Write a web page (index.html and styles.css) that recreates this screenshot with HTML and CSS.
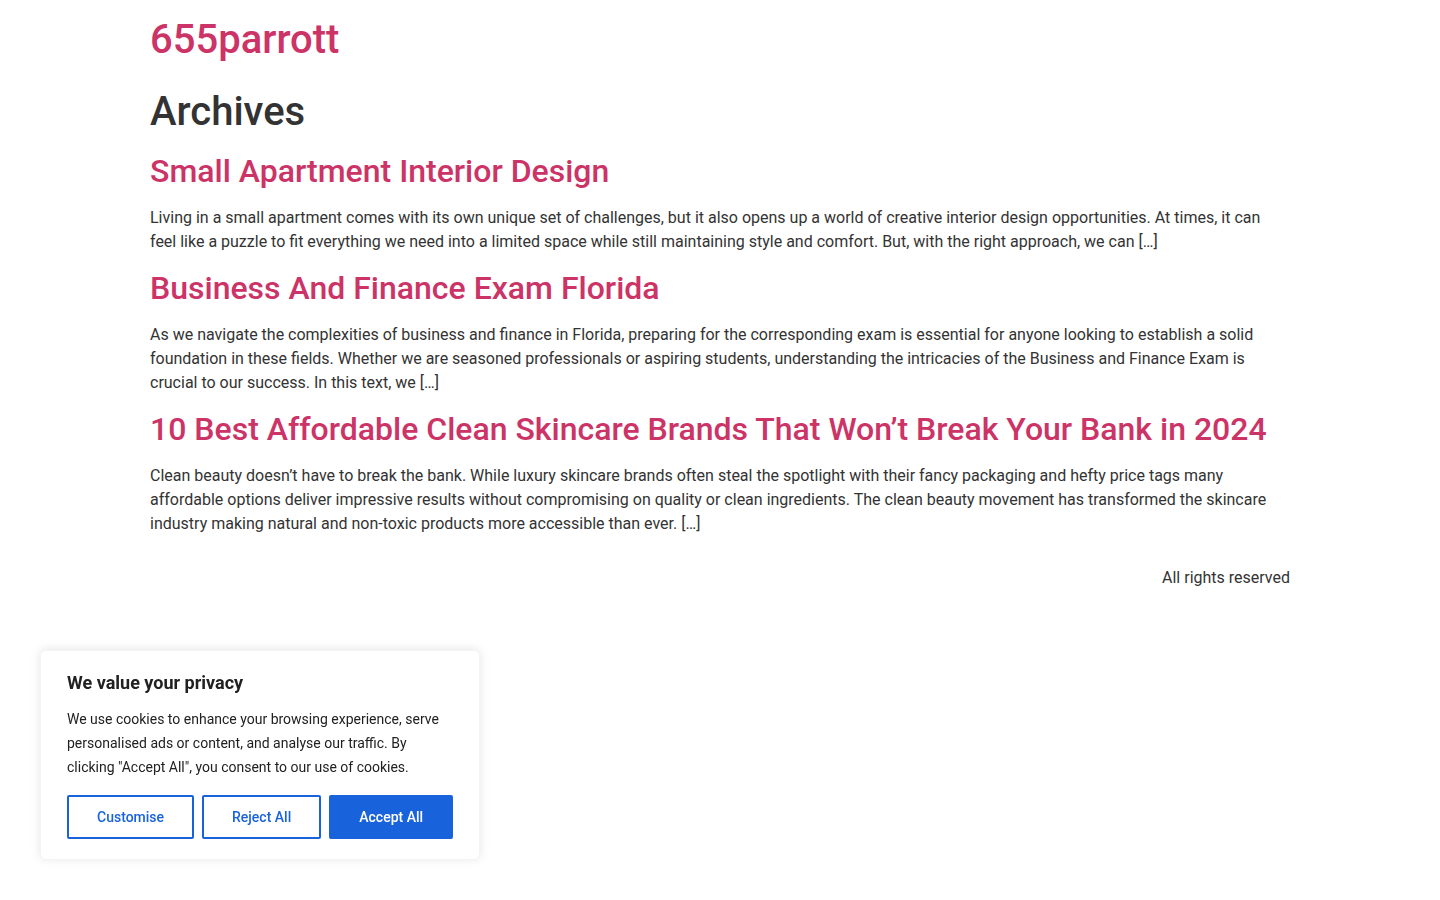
FILE: index.html
```html
<!DOCTYPE html>
<html lang="en">
<head>
    <meta charset="UTF-8">
    <meta name="viewport" content="width=device-width, initial-scale=1.0">
    <title>Archives - 655parrott</title>
    <link rel="stylesheet" href="styles.css">
</head>
<body>
    <header class="site-header">
        <a class="site-title" href="#">655parrott</a>
    </header>

    <main class="site-main">
        <div class="page-header">
            <h1 class="entry-title">Archives</h1>
        </div>
        <div class="page-content">
            <article class="post">
                <h2 class="entry-title"><a href="#">Small Apartment Interior Design</a></h2>
                <p>Living in a small apartment comes with its own unique set of challenges, but it also opens up a world of creative interior design opportunities. At times, it can feel like a puzzle to fit everything we need into a limited space while still maintaining style and comfort. But, with the right approach, we can [&hellip;]</p>
            </article>
            <article class="post">
                <h2 class="entry-title"><a href="#">Business And Finance Exam Florida</a></h2>
                <p>As we navigate the complexities of business and finance in Florida, preparing for the corresponding exam is essential for anyone looking to establish a solid foundation in these fields. Whether we are seasoned professionals or aspiring students, understanding the intricacies of the Business and Finance Exam is crucial to our success. In this text, we [&hellip;]</p>
            </article>
            <article class="post">
                <h2 class="entry-title"><a href="#">10 Best Affordable Clean Skincare Brands That Won&rsquo;t Break Your Bank in 2024</a></h2>
                <p>Clean beauty doesn&rsquo;t have to break the bank. While luxury skincare brands often steal the spotlight with their fancy packaging and hefty price tags many affordable options deliver impressive results without compromising on quality or clean ingredients. The clean beauty movement has transformed the skincare industry making natural and non-toxic products more accessible than ever. [&hellip;]</p>
            </article>
        </div>
    </main>

    <footer class="site-footer">
        <p>All rights reserved</p>
    </footer>

    <!-- cookie consent -->
    <div class="cky-consent">
        <p class="cky-title">We value your privacy</p>
        <p class="cky-text">We use cookies to enhance your browsing experience, serve personalised ads or content, and analyse our traffic. By clicking "Accept All", you consent to our use of cookies.</p>
        <div class="cky-buttons">
            <button class="cky-btn cky-btn-outline">Customise</button>
            <button class="cky-btn cky-btn-outline">Reject All</button>
            <button class="cky-btn cky-btn-accept">Accept All</button>
        </div>
    </div>
</body>
</html>
```

FILE: styles.css
```css
body {
    margin: 0;
    font-family: Roboto, "Liberation Sans", Arial, sans-serif;
    font-size: 16px;
    line-height: 1.5;
    color: #333333;
    background-color: #ffffff;
}

a {
    color: #cc3366;
    text-decoration: none;
}

.site-header,
.site-main,
.site-footer {
    max-width: 1140px;
    margin: 0 auto;
}

.site-header {
    padding: 16px 0;
}

.site-title {
    display: block;
    font-size: 40px;
    font-weight: 500;
    line-height: 1.2;
}

.page-header h1 {
    margin: 8px 0 16px;
    font-size: 40px;
    font-weight: 500;
    line-height: 1.2;
    color: #333333;
}

.post h2 {
    margin: 0 0 16px;
    font-size: 32px;
    font-weight: 500;
    line-height: 1.2;
}

.post p {
    margin: 0 0 14.6px;
}

.site-footer {
    padding: 15px 0 16px;
    text-align: right;
}

.site-footer p {
    margin: 0;
}

.cky-consent {
    position: fixed;
    left: 40px;
    bottom: 40px;
    width: 440px;
    box-sizing: border-box;
    padding: 20px 26px;
    background: #ffffff;
    border: 1px solid #f4f4f4;
    border-radius: 6px;
    box-shadow: 0 -1px 10px 0 rgba(172, 171, 171, 0.3);
    color: #212121;
}

.cky-title {
    margin: 0 0 12px;
    font-size: 18px;
    font-weight: 700;
    line-height: 24px;
}

.cky-text {
    margin: 0;
    font-size: 14px;
    line-height: 24px;
}

.cky-buttons {
    display: flex;
    gap: 8px;
    margin-top: 16px;
}

.cky-btn {
    flex-shrink: 0;
    padding: 8px 28px;
    border: 2px solid #1863dc;
    border-radius: 2px;
    font-family: inherit;
    font-size: 14px;
    font-weight: 500;
    line-height: 24px;
    white-space: nowrap;
    cursor: pointer;
}

.cky-btn-outline {
    background: transparent;
    color: #1863dc;
}

.cky-btn-accept {
    background: #1863dc;
    color: #ffffff;
}
```
